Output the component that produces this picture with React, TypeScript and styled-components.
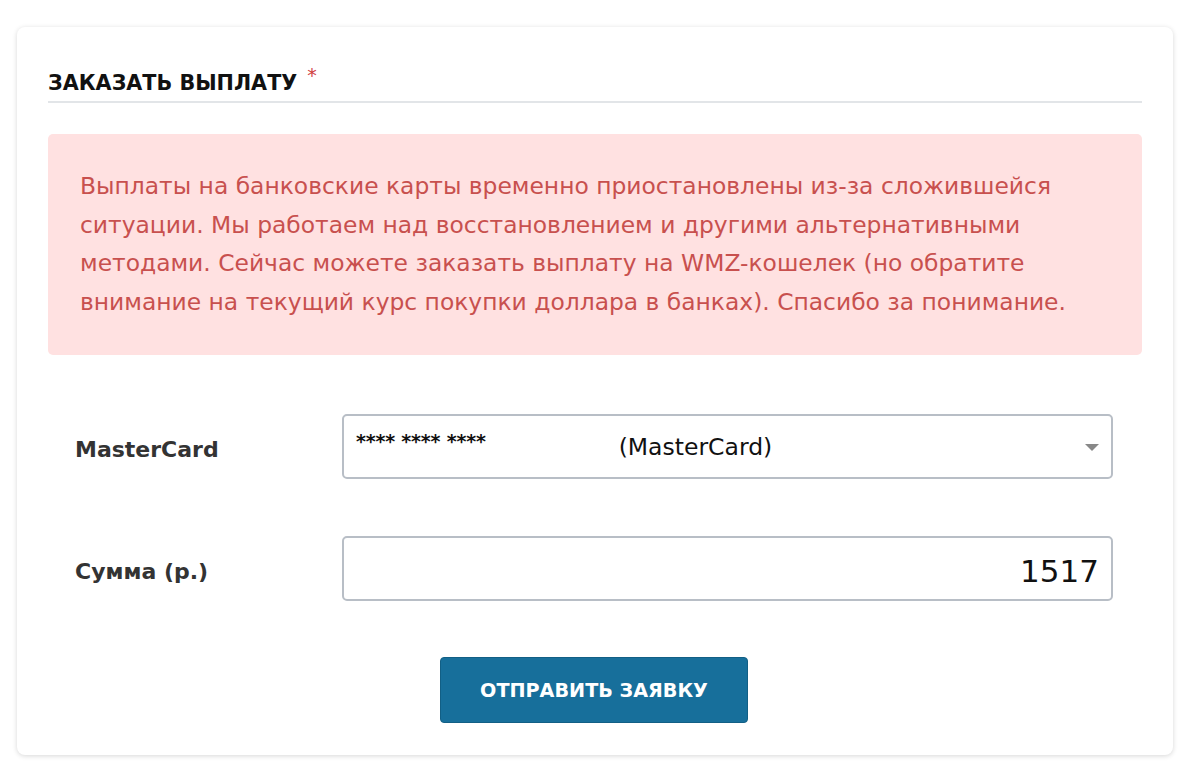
import React from 'react';
import styled, { createGlobalStyle } from 'styled-components';

const GlobalStyle = createGlobalStyle`
    body {
        margin: 0;
        background: #ffffff;
        font-family: "DejaVu Sans", "Noto Sans", sans-serif;
    }
`;

const Page = styled.div`
    padding: 27px 27px 29px 17px;
`;

const Card = styled.div`
    background: #ffffff;
    border-radius: 8px;
    box-shadow: 0 1px 5px rgba(0, 0, 0, 0.16);
    padding: 34px 31px 32px 31px;
`;

const Title = styled.h2`
    margin: 0;
    font-size: 20.7px;
    font-weight: 700;
    color: #111;
    padding-bottom: 4px;
    border-bottom: 2px solid #e2e5e8;
    line-height: 28px;
`;

const Required = styled.sup`
    color: #d0423f;
    font-size: 19px;
    font-weight: 400;
    margin-left: 10px;
    vertical-align: 8px;
`;

const Alert = styled.div`
    margin-top: 31px;
    background: #ffe1e1;
    border-radius: 5px;
    padding: 33px 30px 34px 32px;
    color: #c8504e;
    font-size: 23.4px;
    line-height: 38.5px;
`;

const Form = styled.form`
    margin-top: 59px;
    padding: 0 29px 0 27px;
    display: flex;
    flex-direction: column;
    gap: 57px;
`;

const Row = styled.div`
    display: grid;
    grid-template-columns: 267px 1fr;
    align-items: center;
`;

const Label = styled.label`
    font-size: 22px;
    font-weight: 700;
    color: #333;
    padding-top: 5px;
`;

const Field = styled.div<{ $align?: string }>`
    position: relative;
    height: 65px;
    box-sizing: border-box;
    border: 2px solid #b8bec6;
    border-radius: 5px;
    display: flex;
    align-items: center;
    justify-content: ${(p) => p.$align || 'flex-start'};
    padding: 0 12px;
    color: #111;
`;

const Masked = styled.span`
    font-size: 19px;
    font-weight: 700;
    align-self: flex-start;
    margin-top: 14px;
    letter-spacing: -0.2px;
`;

const CardName = styled.span`
    font-size: 23.5px;
    margin-left: 133px;
`;

const Arrow = styled.span`
    position: absolute;
    right: 12px;
    top: 50%;
    margin-top: -3px;
    width: 0;
    height: 0;
    border-left: 7px solid transparent;
    border-right: 7px solid transparent;
    border-top: 7px solid #888;
`;

const Amount = styled.span`
    font-size: 31px;
    font-weight: 500;
    color: #111;
    padding-top: 4px;
`;

const Actions = styled.div`
    display: flex;
    justify-content: center;
    margin-top: -1px;
`;

const SubmitButton = styled.button`
    width: 308px;
    height: 66px;
    background: #176f9b;
    color: #fff;
    border: 1px solid #125f85;
    border-radius: 4px;
    font-family: "DejaVu Sans", "Noto Sans", sans-serif;
    font-size: 19.2px;
    font-weight: 700;
    cursor: pointer;
`;

const App = () => {
    return (
        <>
            <GlobalStyle />
            <Page>
                <Card>
                    <Title>
                        ЗАКАЗАТЬ ВЫПЛАТУ<Required>*</Required>
                    </Title>
                    <Alert>
                        Выплаты на банковские карты временно приостановлены из-за сложившейся ситуации.
                        Мы работаем над восстановлением и другими альтернативными методами. Сейчас можете
                        заказать выплату на WMZ-кошелек (но обратите внимание на текущий курс покупки
                        доллара в банках). Спасибо за понимание.
                    </Alert>
                    <Form onSubmit={(e) => e.preventDefault()}>
                        <Row>
                            <Label>MasterCard</Label>
                            <Field>
                                <Masked>**** **** ****</Masked>
                                <CardName>(MasterCard)</CardName>
                                <Arrow />
                            </Field>
                        </Row>
                        <Row>
                            <Label>Сумма (р.)</Label>
                            <Field $align="flex-end">
                                <Amount>1517</Amount>
                            </Field>
                        </Row>
                        <Actions>
                            <SubmitButton type="submit">ОТПРАВИТЬ ЗАЯВКУ</SubmitButton>
                        </Actions>
                    </Form>
                </Card>
            </Page>
        </>
    );
};

export default App;
